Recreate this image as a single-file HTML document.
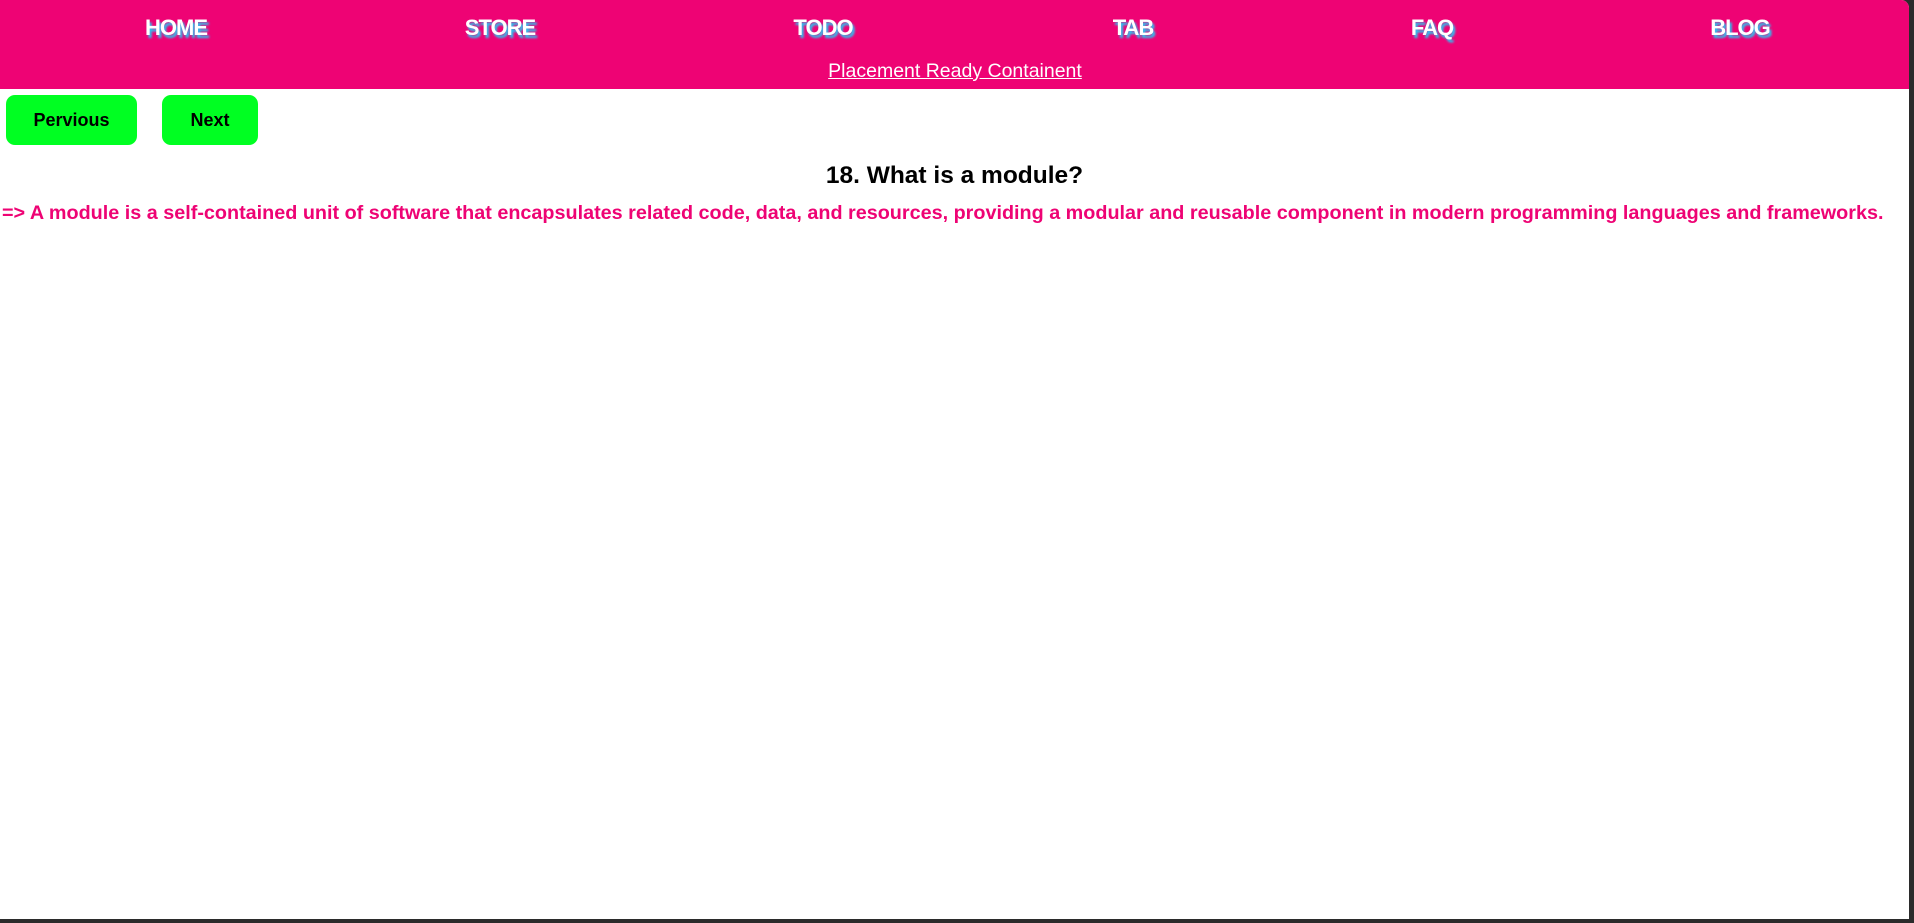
<!DOCTYPE html>
<html><head><meta charset="utf-8"><style>
html,body{margin:0;padding:0;width:1914px;height:923px;overflow:hidden;background:#2b2b2b;font-family:"Liberation Sans",sans-serif}
#page{position:absolute;left:0;top:0;width:1909px;height:919px;background:#fff;border-radius:0 8px 0 0;overflow:hidden}
#nav{position:absolute;left:0;top:0;width:1909px;height:89px;background:#ee0374}
.n{position:absolute;top:15px;transform:translateX(-50%);color:#fff;font-weight:bold;font-size:22px;letter-spacing:-1px;text-shadow:2px 3px 2px #27c8f5}
#pl{position:absolute;left:955px;top:60px;transform:translateX(-50%);color:#fff;font-size:19.5px;text-decoration:underline;white-space:nowrap}
.b{position:absolute;top:95px;height:50px;background:#00ff22;border-radius:9px;font-weight:bold;font-size:18px;line-height:50px;text-align:center;color:#000}
#h{position:absolute;left:0;width:1909px;top:162px;text-align:center;font-weight:bold;font-size:24.5px}
#a{position:absolute;left:2px;top:202px;color:#ee0374;font-weight:bold;font-size:19.8px;white-space:nowrap}
</style></head><body><div id="page">
<div id="nav">
<span class="n" style="left:176px">HOME</span>
<span class="n" style="left:500px">STORE</span>
<span class="n" style="left:823px">TODO</span>
<span class="n" style="left:1133px">TAB</span>
<span class="n" style="left:1432px">FAQ</span>
<span class="n" style="left:1740px">BLOG</span>
<span id="pl">Placement Ready Containent</span>
</div>
<div class="b" style="left:6px;width:131px">Pervious</div>
<div class="b" style="left:162px;width:96px">Next</div>
<div id="h">18. What is a module?</div>
<div id="a">=&gt; A module is a self-contained unit of software that encapsulates related code, data, and resources, providing a modular and reusable component in modern programming languages and frameworks.</div>
</div></body></html>
